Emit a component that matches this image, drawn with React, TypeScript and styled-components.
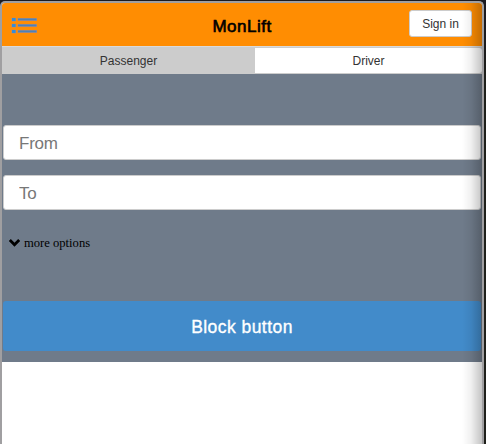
import React from 'react';
import styled, { createGlobalStyle } from 'styled-components';

const GlobalStyle = createGlobalStyle`
  * { box-sizing: border-box; }
  body { margin: 0; overflow: hidden; background: #1d1d1b; }
  button, input { font-family: "Liberation Sans", Arial, sans-serif; }
`;

const Desktop = styled.div`
  height: 444px;
  padding: 1px 2px 0 0;
  background: linear-gradient(#1c1b20 0 20px, #1f201b 80px);
`;

const Device = styled.div`
  position: relative;
  height: 443px;
  border: 2px solid #a09fa1;
  border-bottom: 0;
  border-radius: 5px 5px 0 0;
  background: #fff;
  overflow: hidden;
  font-family: "Liberation Sans", Arial, sans-serif;
`;

const EdgeShade = styled.div`
  position: absolute;
  inset: 0 0 0 auto;
  width: 20px;
  pointer-events: none;
  background: linear-gradient(to right, rgba(0, 0, 0, 0), rgba(0, 0, 0, 0.06) 45%, rgba(0, 0, 0, 0.23));
`;

const Header = styled.header`
  display: grid;
  grid-template-columns: 80px 1fr 80px;
  height: 43px;
  background: #ff8d02;
`;

const MenuIcon = styled.svg`
  display: block;
  margin: 14px 0 0 9px;
`;

const Title = styled.h1`
  margin: 14px 0 0;
  text-align: center;
  font-size: 17px;
  line-height: 20px;
  font-weight: 400;
  letter-spacing: 0.5px;
  -webkit-text-stroke: 0.65px #000;
  color: #000;
`;

const SignIn = styled.button`
  justify-self: end;
  width: 63px;
  height: 27px;
  margin: 7px 10px 0 0;
  padding: 1px 0 0;
  border: 1px solid #ccc;
  border-radius: 3px;
  background: #fff;
  color: #333;
  font-size: 12px;
  line-height: 24px;
`;

const Tabs = styled.nav`
  display: grid;
  grid-template-columns: 253px 1fr;
  height: 28px;
  padding: 1px 0;
  background: #ccc;
  border-top: 1px solid #dadada;
`;

const Tab = styled.button<{ $active?: boolean }>`
  border: 0;
  padding: 1px 0 0;
  border-radius: ${(p) => (p.$active ? '3px 0 0 3px' : '0 3px 3px 0')};
  background: ${(p) => (p.$active ? '#ccc' : '#fff')};
  color: #333;
  font-size: 12px;
  line-height: 24px;
`;

const Panel = styled.main`
  display: flex;
  flex-direction: column;
  height: 288px;
  padding: 51px 1px 11px;
  background: #6f7b8a;
`;

const Field = styled.input`
  width: 100%;
  height: 35px;
  margin-bottom: 15px;
  padding: 2px 15px 0;
  border: 1px solid #ccc;
  border-radius: 3px;
  background: #fff;
  font-size: 17px;
  letter-spacing: -0.25px;
  outline: none;
  &::placeholder { color: #777; opacity: 1; }
`;

const MoreOptions = styled.div`
  display: flex;
  align-items: center;
  height: 20px;
  margin: 8px 0 0 5px;
  gap: 3px;
  color: #000;
  font: 12.6px/20px "Liberation Serif", "Times New Roman", serif;
`;

const BlockButton = styled.button`
  width: 100%;
  height: 50px;
  margin-top: auto;
  padding: 2px 0 0;
  border: 0;
  border-radius: 3px;
  background: #428bca;
  color: #fff;
  font-size: 17.5px;
  letter-spacing: 0.45px;
  -webkit-text-stroke: 0.35px #fff;
`;

export default function App() {
  return (
    <>
      <GlobalStyle />
      <Desktop>
        <Device>
          <Header>
            <MenuIcon width="27" height="18" viewBox="0 0 27 18" aria-label="Menu">
              {[1, 7, 13].map((y) => (
                <g key={y}>
                  <rect x="0.5" y={y - 0.2} width="4.6" height="3.6" fill="#b98c78" />
                  <rect x="1" y={y} width="3.6" height="3" fill="#348dd8" />
                  <rect x="6.6" y={y} width="19.4" height="3" fill="#b08a7c" />
                  <rect x="7" y={y + 0.5} width="18.5" height="1.8" fill="#4d82b5" />
                </g>
              ))}
            </MenuIcon>
            <Title>MonLift</Title>
            <SignIn>Sign in</SignIn>
          </Header>
          <Tabs>
            <Tab $active>Passenger</Tab>
            <Tab>Driver</Tab>
          </Tabs>
          <Panel>
            <Field placeholder="From" aria-label="From" />
            <Field placeholder="To" aria-label="To" />
            <MoreOptions>
              <svg width="13" height="10" viewBox="0 0 13 10" aria-hidden="true">
                <path d="M1.8 2 6.5 6.7 11.2 2" fill="none" stroke="#000" strokeWidth="2.9" />
              </svg>
              <span>more options</span>
            </MoreOptions>
            <BlockButton>Block button</BlockButton>
          </Panel>
          <EdgeShade />
        </Device>
      </Desktop>
    </>
  );
}
